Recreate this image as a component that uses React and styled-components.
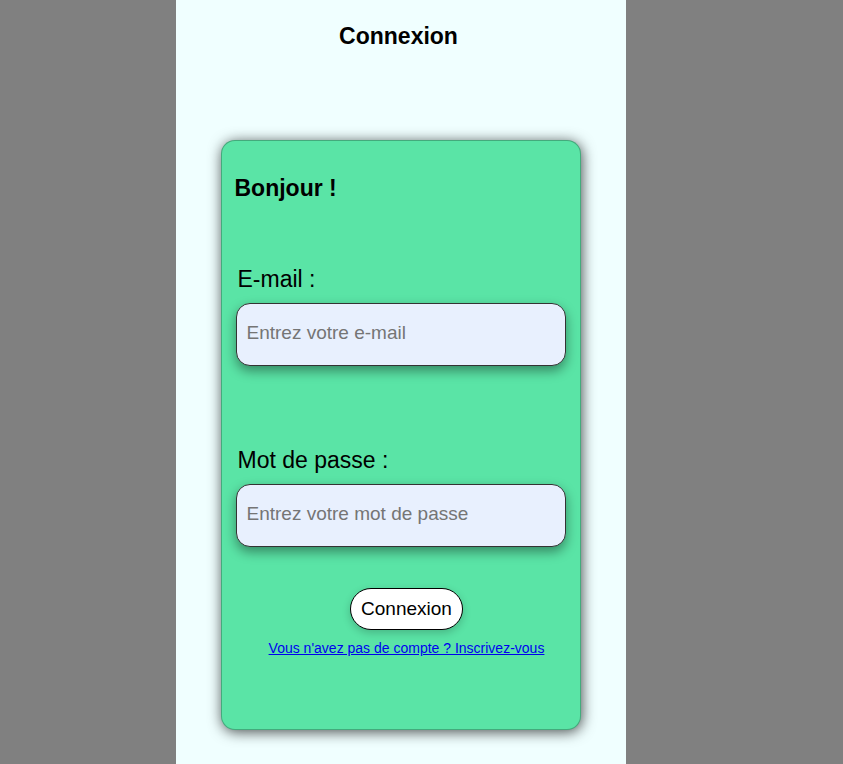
import React from 'react';
import styled, { createGlobalStyle } from 'styled-components';

const GlobalStyle = createGlobalStyle`
  html, body {
    margin: 0;
    padding: 0;
    background: #808080;
    font-family: "Liberation Sans", Arial, sans-serif;
  }
`;

const Page = styled.div`
  width: 450px;
  min-height: 100vh;
  margin-left: calc(50% - 246px);
  background: #f0ffff;
  display: flex;
  flex-direction: column;
  align-items: center;
`;

const Title = styled.h1`
  margin: 22px 4px 0 0;
  font-size: 23px;
  font-weight: bold;
  line-height: 28px;
`;

const Card = styled.form`
  box-sizing: border-box;
  width: 360px;
  height: 590px;
  margin-top: 90px;
  padding: 0 14px;
  background: #5ae4a6;
  border: 1px solid rgba(0, 0, 0, 0.25);
  border-radius: 14px;
  box-shadow: 1px 2px 14px rgba(0, 0, 0, 0.7);
  display: flex;
  flex-direction: column;
`;

const Greeting = styled.h2`
  margin: 35px 0 0 -1px;
  font-size: 23px;
  font-weight: bold;
  line-height: 25px;
`;

const Label = styled.label`
  margin: ${p => p.$top}px 0 0 2px;
  font-size: 23px;
  line-height: 25px;
`;

const Input = styled.input`
  box-sizing: border-box;
  width: 330px;
  height: 63px;
  margin-top: 11px;
  padding: 0 10px 3px;
  background: #e8f0fe;
  border: 1px solid #333;
  border-radius: 14px;
  box-shadow: 0 5px 12px rgba(0, 0, 0, 0.4);
  font-family: "Liberation Sans", Arial, sans-serif;
  font-size: 19px;
  outline: none;
  &::placeholder {
    color: #757575;
  }
`;

const Footer = styled.div`
  margin-top: 41px;
  padding-left: 12px;
  display: flex;
  flex-direction: column;
  align-items: center;
`;

const Button = styled.button`
  height: 42px;
  padding: 0 10px;
  background: #fff;
  border: 1px solid #000;
  border-radius: 21px;
  box-shadow: 0 3px 8px rgba(0, 0, 0, 0.2);
  font-family: "Liberation Sans", Arial, sans-serif;
  font-size: 19px;
  color: #000;
`;

const SignupLink = styled.a`
  margin-top: 10px;
  font-size: 14px;
  line-height: 16px;
  color: #0000ee;
  text-decoration: underline;
`;

export default function App() {
  return (
    <>
      <GlobalStyle />
      <Page>
        <Title>Connexion</Title>
        <Card onSubmit={e => e.preventDefault()}>
          <Greeting>Bonjour !</Greeting>
          <Label $top={66}>E-mail :</Label>
          <Input type="email" placeholder="Entrez votre e-mail" />
          <Label $top={82}>Mot de passe :</Label>
          <Input type="password" placeholder="Entrez votre mot de passe" />
          <Footer>
            <Button type="submit">Connexion</Button>
            <SignupLink href="#">Vous n'avez pas de compte ? Inscrivez-vous</SignupLink>
          </Footer>
        </Card>
      </Page>
    </>
  );
}
